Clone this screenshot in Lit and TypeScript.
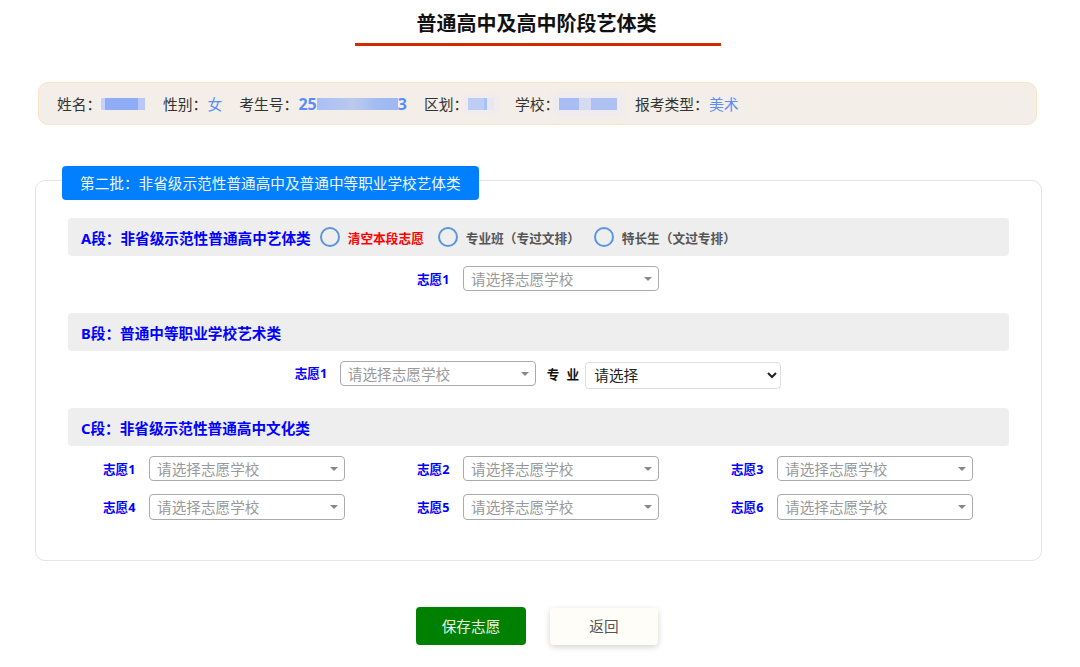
import { LitElement, html, css } from "lit";
import { customElement } from "lit/decorators.js";

@customElement("app-root")
export class AppRoot extends LitElement {
  static styles = css`
    :host {
      display: block;
      width: 1080px;
      height: 667px;
      overflow: hidden;
      background: #fff;
      font-family: "Noto Sans", "Noto Sans CJK SC", sans-serif;
      font-size: 14.65px;
      color: #333;
    }
    * { box-sizing: border-box; }
    .title {
      width: 366px;
      height: 46px;
      margin-left: 355px;
      padding: 9px 3px 0 0;
      border-bottom: 3.5px solid #d42a00;
      text-align: center;
      font-size: 20px;
      line-height: 30px;
      font-weight: 700;
      color: #111;
      white-space: nowrap;
    }
    .info {
      display: flex;
      align-items: center;
      width: 999px;
      height: 43px;
      margin: 36px 0 0 38px;
      padding-left: 18px;
      background: #f4eee8;
      border: 1px solid #fbe3c8;
      border-radius: 10px;
      font-size: 14.8px;
      white-space: nowrap;
    }
    .info .item { display: flex; align-items: center; }
    .item.g17 { margin-right: 17px; }
    .item.g18 { margin-right: 17.6px; }
    .item.g21 { margin-right: 20.6px; }
    .val { color: #5a8dfa; }
    .num { color: #5a8dfa; font-weight: 700; font-size: 16px; }
    .mask { display: block; height: 12px; filter: blur(0.6px); }
    .m-name { width: 44px; background: linear-gradient(90deg, #c3d1fb 0 10%, #8facf6 10% 85%, #b7c7f8 85%); }
    .m-num { width: 81px; background: linear-gradient(90deg, #a9bff4, #bcc9ef 45%, #a2bbf3 75%, #9db8f3); }
    .m-area {
      width: 26px;
      background: linear-gradient(90deg, #bccdf6 0 60%, #aabff5 60% 75%, #e9e6ee 75%);
      box-shadow: 0 0 5px 3px rgba(236, 234, 242, 0.7);
    }
    .m-school {
      width: 58px;
      background: linear-gradient(90deg, #a9bdf5 0 35%, #d5daf0 35% 55%, #adc1f3 55%);
      box-shadow: 0 0 6px 5px rgba(236, 234, 242, 0.8);
    }
    .card {
      width: 1007px;
      height: 381px;
      margin: 55px 0 0 35px;
      padding: 0 32px 0 32px;
      border: 1px solid #e4e4e4;
      border-radius: 10px;
    }
    .tab {
      width: 417px;
      height: 34px;
      margin: -15px 0 0 -6px;
      padding-left: 18px;
      background: #0080ff;
      color: #f2f8ff;
      border-radius: 4px;
      line-height: 34px;
      white-space: nowrap;
    }
    .head {
      display: flex;
      align-items: center;
      width: 941px;
      height: 38px;
      padding-left: 13px;
      background: #eeeeee;
      border-radius: 4px;
      color: #0000ff;
      font-weight: 700;
      white-space: nowrap;
    }
    .head.a { margin-top: 18px; }
    .head.b { margin-top: 22px; }
    .head.c { margin-top: 19.5px; }
    .radio { display: flex; align-items: center; font-size: 12.7px; color: #555; }
    .radio i {
      display: block;
      width: 20px;
      height: 20px;
      margin-right: 8px;
      border: 2px solid #5a95e0;
      border-radius: 50%;
    }
    .radio.r1 { margin-left: 9px; color: #ff0000; width: 118px; }
    .radio.r2 { width: 156px; }
    .grid {
      display: grid;
      grid-template-columns: repeat(3, 314px);
      row-gap: 13px;
      margin: 9.5px 0 0 35px;
    }
    .cell { display: flex; align-items: center; }
    .second { grid-column: 2; }
    .lab {
      width: 46px;
      flex: none;
      color: #0000ff;
      font-size: 12.6px;
      font-weight: 700;
      white-space: nowrap;
    }
    .sel {
      position: relative;
      width: 196px;
      height: 25.5px;
      flex: none;
      padding-left: 7px;
      border: 1px solid #aaa;
      border-radius: 4px;
      color: #999;
      line-height: 25px;
      white-space: nowrap;
    }
    .sel::after {
      content: "";
      position: absolute;
      right: 6px;
      top: 10px;
      border-left: 4px solid transparent;
      border-right: 4px solid transparent;
      border-top: 4.5px solid #888;
    }
    .brow {
      display: flex;
      align-items: flex-start;
      justify-content: center;
      margin-top: 9.5px;
      height: 28px;
      padding-right: 1px;
    }
    .brow .lab { width: 45px; line-height: 25px; }
    .brow .sel { margin-right: 11px; }
    .zy {
      width: 38.5px;
      font-size: 12.6px;
      font-weight: 700;
      line-height: 27px;
      color: #111;
      word-spacing: 4px;
      white-space: pre;
    }
    select {
      width: 196px;
      height: 26.5px;
      margin-top: 1.5px;
      padding-left: 4px;
      background: #fff;
      border: 1px solid #dedede;
      border-radius: 4px;
      font: inherit;
      color: #222;
    }
    .actions { display: flex; gap: 24px; margin: 46px 0 0 416px; }
    .btn {
      width: 110px;
      height: 38px;
      border-radius: 4px;
      line-height: 38px;
      text-align: center;
    }
    .save { background: #008000; color: #e8f6e8; }
    .back {
      width: 108px;
      height: 37px;
      margin-top: 0.5px;
      line-height: 37px;
      background: #fffdf8;
      color: #555;
      box-shadow: 0 2px 6px rgba(0, 0, 0, 0.18);
    }
  `;

  private sel() {
    return html`<div class="sel">请选择志愿学校</div>`;
  }

  private cell(n: number, cls = "") {
    return html`<div class="cell ${cls}"><span class="lab">志愿${n}</span>${this.sel()}</div>`;
  }

  render() {
    return html`
      <div class="title">普通高中及高中阶段艺体类</div>
      <div class="info">
        <div class="item g18">姓名：<span class="mask m-name"></span></div>
        <div class="item g17">性别：<span class="val">女</span></div>
        <div class="item g17">
          考生号：<span class="num">25</span><span class="mask m-num"></span><span class="num">3</span>
        </div>
        <div class="item g21">区划：<span class="mask m-area"></span></div>
        <div class="item g18">学校：<span class="mask m-school"></span></div>
        <div class="item">报考类型：<span class="val">美术</span></div>
      </div>
      <div class="card">
        <div class="tab">第二批：非省级示范性普通高中及普通中等职业学校艺体类</div>
        <div class="head a">
          A段：非省级示范性普通高中艺体类
          <div class="radio r1"><i></i>清空本段志愿</div>
          <div class="radio r2"><i></i>专业班（专过文排）</div>
          <div class="radio"><i></i>特长生（文过专排）</div>
        </div>
        <div class="grid">${this.cell(1, "second")}</div>
        <div class="head b">B段：普通中等职业学校艺术类</div>
        <div class="brow">
          <span class="lab">志愿1</span>${this.sel()}
          <span class="zy">专 业</span>
          <select><option>请选择</option></select>
        </div>
        <div class="head c">C段：非省级示范性普通高中文化类</div>
        <div class="grid">
          ${[1, 2, 3, 4, 5, 6].map((n) => this.cell(n))}
        </div>
      </div>
      <div class="actions">
        <div class="btn save">保存志愿</div>
        <div class="btn back">返回</div>
      </div>
    `;
  }
}
